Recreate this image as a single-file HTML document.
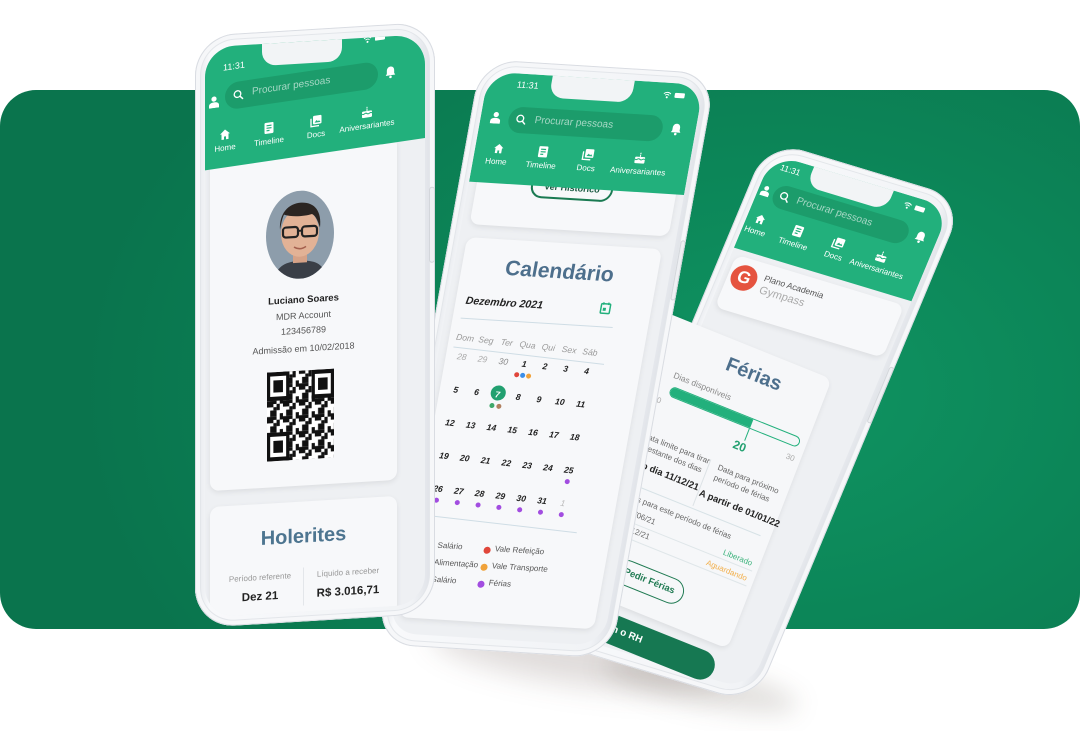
<!DOCTYPE html>
<html><head><meta charset="utf-8">
<style>
*{margin:0;padding:0;box-sizing:border-box}
body{width:1080px;height:731px;overflow:hidden;background:#fff;position:relative;font-family:"Liberation Sans",sans-serif}
.a{position:absolute}
.ph{position:absolute;left:0;top:0;transform-origin:0 0;background:linear-gradient(90deg,#e2e5ea,#f8f9fb 6%,#f1f3f6 90%,#dcdfe5);box-shadow:inset 0 0 0 1px #d9dce2,inset 0 0 0 5px #f6f7f9,inset 0 0 0 6px #e3e6ea}
.scr{position:absolute;overflow:hidden;background:#eef0f3}
.hd{position:absolute;left:0;top:0;background:#22b07c;transform-origin:0 0}
.notch{position:absolute;background:#f2f4f6;border-radius:0 0 14px 14px}
.card{position:absolute;background:#f7f8fa;border-radius:9px;box-shadow:0 2px 6px rgba(0,0,0,.08)}
.w{color:#fff}
.t{position:absolute;white-space:nowrap}
.tab{position:absolute;width:70px;margin-left:-35px;text-align:center;color:#fff;font-size:8px}
.tab svg{display:block;margin:0 auto 3px}
.srch{position:absolute;background:#1c9c6b;border-radius:14px;color:rgba(255,255,255,.6);font-size:10px}
.blk{position:absolute;left:0;top:0;transform-origin:0 0}
.btn{position:absolute;border-radius:13px;text-align:center;font-weight:bold}
.num{position:absolute;width:20px;margin-left:-10px;text-align:center;font-size:8.5px;font-weight:bold;color:#222;font-style:italic}
.dot{position:absolute;width:5px;height:5px;border-radius:50%}
</style></head><body>

<!-- green band -->
<div class="a" style="left:0;top:90px;width:1080px;height:539px;border-radius:36px;background:radial-gradient(ellipse 700px 500px at 780px 300px,#0f9462,#0c8658 45%,#0a744d 100%)"></div>

<!-- shadows -->
<div class="a" style="left:430px;top:625px;width:300px;height:60px;background:rgba(60,40,30,.16);filter:blur(14px);border-radius:50%;transform:rotate(8deg)"></div>
<div class="a" style="left:600px;top:665px;width:200px;height:40px;background:rgba(60,40,30,.14);filter:blur(12px);border-radius:50%;transform:rotate(12deg)"></div>

<!-- ================= PHONE 3 ================= -->
<div class="ph" style="width:205px;height:540px;border-radius:38px;transform:matrix(0.96,0.29,-0.39,0.935,768,140)">
  <div class="a" style="left:200px;top:180px;width:5px;height:60px;border:1px solid #d3d6db;border-radius:3px;background:#eef0f3"></div>
  <div class="scr" style="left:10px;top:12px;width:185px;height:516px;border-radius:28px">
    <div class="hd" style="width:185px;height:100px"></div>
    <div class="notch" style="left:43px;top:-12px;width:83px;height:33px"></div>
    <div class="t w" style="left:12px;top:5px;font-size:8.5px">11:31</div>
    <svg class="a" style="left:140px;top:6px" width="24" height="8" viewBox="0 0 24 8"><path d="M1 3a5 5 0 0 1 7 0M2.5 4.5a3 3 0 0 1 4 0" stroke="#fff" fill="none" stroke-width="1"/><circle cx="4.5" cy="6.5" r="1" fill="#fff"/><rect x="12" y="1.5" width="10" height="5" rx="1" fill="#fff"/></svg>
    <div class="srch" style="left:16px;top:26px;width:140px;height:24px;padding:6px 0 0 24px">Procurar pessoas</div>
    <svg class="a" style="left:22px;top:32px" width="11" height="11" viewBox="0 0 11 11"><circle cx="4.5" cy="4.5" r="3.3" stroke="#fff" stroke-width="1.3" fill="none"/><path d="M7 7l3 3" stroke="#fff" stroke-width="1.4"/></svg>
    <svg class="a" style="left:3px;top:31px" width="9" height="12" viewBox="0 0 10 12"><circle cx="5" cy="3" r="2.6" fill="#fff"/><path d="M0 12v-2.5c0-2 2-3.2 5-3.2s5 1.2 5 3.2V12z" fill="#fff"/></svg>
    <svg class="a" style="left:163px;top:30px" width="11" height="13" viewBox="0 0 12 14"><path d="M6 1c-2.5 0-4 2-4 4.5v3L.8 10.5h10.4L10 8.5v-3C10 3 8.5 1 6 1z" fill="#fff"/><circle cx="6" cy="12.3" r="1.4" fill="#fff"/></svg>
    <div class="tab" style="left:13px;top:60px"><svg width="11" height="11" viewBox="0 0 12 12"><path d="M6 1L1 5.5h1.5V11h2.5V8h2v3h2.5V5.5H11z" fill="#fff"/></svg>Home</div>
    <div class="tab" style="left:53px;top:60px"><svg width="10" height="12" viewBox="0 0 10 12"><rect x=".5" y=".5" width="9" height="11" rx="1" fill="#fff"/><path d="M2.5 3.5h5M2.5 6h5M2.5 8.5h3" stroke="#22b07c" stroke-width="1.2"/></svg>Timeline</div>
    <div class="tab" style="left:95px;top:60px"><svg width="12" height="12" viewBox="0 0 12 12"><path d="M1 3v8h8" stroke="#fff" fill="none" stroke-width="1.3"/><rect x="3" y=".5" width="8.5" height="8.5" rx="1" fill="#fff"/><path d="M4.5 7.5l2-2.5 1.5 1.5 1-1 1.5 2z" fill="#22b07c"/></svg>Docs</div>
    <div class="tab" style="left:140px;top:60px"><svg width="12" height="12" viewBox="0 0 12 12"><path d="M6 .5c.8 1 .8 1.8 0 2.2-.8-.4-.8-1.2 0-2.2z" fill="#fff"/><rect x="5.5" y="3" width="1" height="2" fill="#fff"/><rect x="1" y="5" width="10" height="6.5" rx="1" fill="#fff"/><path d="M1 7.5q1.25 1 2.5 0t2.5 0 2.5 0 2.5 0" stroke="#22b07c" fill="none"/></svg>Aniversariantes</div>
    <div class="card" style="left:5px;top:106px;width:175px;height:56px"></div>
    <div class="a" style="left:8px;top:113px;width:26px;height:26px;border-radius:50%;background:#e5533f;color:#fff;font-weight:bold;font-size:17px;text-align:center;line-height:26px">G</div>
    <div class="t" style="left:40px;top:115px;font-size:8.5px;color:#555">Plano Academia</div>
    <div class="t" style="left:40px;top:127px;font-size:11px;color:#aaa">Gympass</div>
  </div>
</div>
<!-- Férias block -->
<div class="blk" style="transform:matrix(0.92,0.37,-0.36,0.93,680,318)">
  <div class="card" style="left:-30px;top:0;width:195px;height:290px;background:#f6f7f9"></div>
  <div class="t" style="left:40px;top:14px;width:100px;text-align:center;font-size:20px;font-weight:bold;color:#4d6f8c">Férias</div>
  <div class="t" style="left:15px;top:50px;font-size:8.5px;color:#888">Dias disponíveis</div>
  <div class="t" style="left:8px;top:80px;font-size:8px;color:#aaa">0</div>
  <div class="a" style="left:17px;top:66px;width:141px;height:11px;border:1.5px solid #22b07c;border-radius:6px;background:#f4f6f8;overflow:hidden"><div style="width:88px;height:100%;background:#22b07c"></div></div>
  <div class="a" style="left:105px;top:77px;width:1px;height:13px;background:#22b07c"></div>
  <div class="t" style="left:96px;top:90px;font-size:12px;font-weight:bold;color:#22a070">20</div>
  <div class="t" style="left:150px;top:84px;font-size:8px;color:#aaa">30</div>
  <div class="t" style="left:8px;top:118px;font-size:8px;color:#666">Data limite para tirar</div>
  <div class="t" style="left:8px;top:129px;font-size:8px;color:#666">o restante dos dias</div>
  <div class="t" style="left:0;top:146px;font-size:9.5px;font-weight:bold;color:#222">Até o dia 11/12/21</div>
  <div class="a" style="left:80px;top:120px;width:1px;height:50px;background:#dde3e6"></div>
  <div class="t" style="left:90px;top:120px;font-size:8px;color:#666">Data para próximo</div>
  <div class="t" style="left:90px;top:131px;font-size:8px;color:#666">período de férias</div>
  <div class="t" style="left:82px;top:150px;font-size:9.5px;font-weight:bold;color:#222">A partir de 01/01/22</div>
  <div class="a" style="left:-30px;top:172px;width:185px;height:1px;background:#d7e2e6"></div>
  <div class="t" style="left:-20px;top:180px;font-size:8px;color:#666">Meus pedidos para este período de férias</div>
  <div class="t" style="left:-20px;top:195px;font-size:8px;color:#666">01/06/21 a 24/06/21</div>
  <div class="t" style="left:-20px;top:211px;font-size:8px;color:#666">01/12/21 a 30/12/21</div>
  <div class="t" style="left:126px;top:197px;font-size:8px;color:#3cb37c">Liberado</div>
  <div class="t" style="left:114px;top:213px;font-size:8px;color:#f2ae48">Aguardando</div>
  <div class="a" style="left:-20px;top:208px;width:180px;height:1px;background:#dfe6e9"></div>
  <div class="a" style="left:-20px;top:224px;width:180px;height:1px;background:#dfe6e9"></div>
  <div class="btn" style="left:30px;top:244px;width:74px;height:26px;border:1.5px solid #1f7a52;color:#1f7a52;font-size:9.5px;line-height:23px">Pedir Férias</div>
  <div class="btn" style="left:-70px;top:300px;width:230px;height:30px;border-radius:15px;background:#167852;color:#fff;font-size:10px;line-height:30px">Falar com o RH</div>
</div>

<!-- ================= PHONE 2 ================= -->
<div class="ph" style="width:235px;height:585px;border-radius:38px;transform:matrix(1,0.062,-0.18,1,481,59)">
  <div class="a" style="left:230px;top:167px;width:5px;height:60px;border:1px solid #d3d6db;border-radius:3px;background:#eef0f3"></div>
  <div class="scr" style="left:10px;top:12px;width:215px;height:561px;border-radius:28px">
    <div class="card" style="left:8px;top:60px;width:199px;height:92px"></div>
    <div class="btn" style="left:62px;top:98px;width:82px;height:24px;border:2px solid #1a7a52;color:#1a5a42;font-size:9px;line-height:20px">Ver Histórico</div>
    <div class="hd" style="width:215px;height:110px"></div>
    <div class="notch" style="left:64px;top:-12px;width:82px;height:34px"></div>
    <div class="t w" style="left:30px;top:6px;font-size:9px">11:31</div>
    <svg class="a" style="left:176px;top:8px" width="24" height="8" viewBox="0 0 24 8"><path d="M1 3a5 5 0 0 1 7 0M2.5 4.5a3 3 0 0 1 4 0" stroke="#fff" fill="none" stroke-width="1"/><circle cx="4.5" cy="6.5" r="1" fill="#fff"/><rect x="12" y="1.5" width="10" height="5" rx="1" fill="#fff"/></svg>
    <div class="srch" style="left:28px;top:33px;width:154px;height:26px;padding:7px 0 0 26px">Procurar pessoas</div>
    <svg class="a" style="left:35px;top:40px" width="11" height="11" viewBox="0 0 11 11"><circle cx="4.5" cy="4.5" r="3.3" stroke="#fff" stroke-width="1.3" fill="none"/><path d="M7 7l3 3" stroke="#fff" stroke-width="1.4"/></svg>
    <svg class="a" style="left:10px;top:39px" width="10" height="12" viewBox="0 0 10 12"><circle cx="5" cy="3" r="2.6" fill="#fff"/><path d="M0 12v-2.5c0-2 2-3.2 5-3.2s5 1.2 5 3.2V12z" fill="#fff"/></svg>
    <svg class="a" style="left:190px;top:39px" width="11" height="13" viewBox="0 0 12 14"><path d="M6 1c-2.5 0-4 2-4 4.5v3L.8 10.5h10.4L10 8.5v-3C10 3 8.5 1 6 1z" fill="#fff"/><circle cx="6" cy="12.3" r="1.4" fill="#fff"/></svg>
    <div class="tab" style="left:23px;top:70px"><svg width="11" height="11" viewBox="0 0 12 12"><path d="M6 1L1 5.5h1.5V11h2.5V8h2v3h2.5V5.5H11z" fill="#fff"/></svg>Home</div>
    <div class="tab" style="left:68px;top:70px"><svg width="10" height="12" viewBox="0 0 10 12"><rect x=".5" y=".5" width="9" height="11" rx="1" fill="#fff"/><path d="M2.5 3.5h5M2.5 6h5M2.5 8.5h3" stroke="#22b07c" stroke-width="1.2"/></svg>Timeline</div>
    <div class="tab" style="left:113px;top:70px"><svg width="12" height="12" viewBox="0 0 12 12"><path d="M1 3v8h8" stroke="#fff" fill="none" stroke-width="1.3"/><rect x="3" y=".5" width="8.5" height="8.5" rx="1" fill="#fff"/><path d="M4.5 7.5l2-2.5 1.5 1.5 1-1 1.5 2z" fill="#22b07c"/></svg>Docs</div>
    <div class="tab" style="left:165px;top:70px"><svg width="12" height="12" viewBox="0 0 12 12"><path d="M6 .5c.8 1 .8 1.8 0 2.2-.8-.4-.8-1.2 0-2.2z" fill="#fff"/><rect x="5.5" y="3" width="1" height="2" fill="#fff"/><rect x="1" y="5" width="10" height="6.5" rx="1" fill="#fff"/><path d="M1 7.5q1.25 1 2.5 0t2.5 0 2.5 0 2.5 0" stroke="#22b07c" fill="none"/></svg>Aniversariantes</div>

    <div class="card" style="left:8px;top:165px;width:195px;height:380px"></div>
    <div class="t" style="left:8px;top:182px;width:195px;text-align:center;font-size:21px;font-weight:bold;color:#4d6f8c">Calendário</div>
    <div class="t" style="left:18px;top:222px;font-size:10.5px;font-weight:bold;color:#222;font-style:italic">Dezembro 2021</div>
    <svg class="a" style="left:152px;top:220px" width="11" height="13" viewBox="0 0 11 13"><rect x="1" y="2.5" width="9" height="9.5" rx="1" fill="none" stroke="#22b07c" stroke-width="1.5"/><rect x="3" y="6.5" width="3" height="3" fill="#22b07c"/><path d="M3 1v2.5M8 1v2.5" stroke="#22b07c" stroke-width="1.3"/></svg>
    <div class="a" style="left:16px;top:245px;width:152px;height:1px;background:#cfdde5"></div>
    <div class="a" style="left:14px;top:250px;width:160px;height:200px;transform:skewY(3deg);transform-origin:0 0">
      <div class="a" style="left:0;top:24px;width:152px;height:1px;background:#cfdde5"></div>
      <div class="num" style="left:10px;top:9px;font-weight:normal;color:#999">Dom</div>
      <div class="num" style="left:31px;top:9px;font-weight:normal;color:#999">Seg</div>
      <div class="num" style="left:52px;top:9px;font-weight:normal;color:#999">Ter</div>
      <div class="num" style="left:73px;top:9px;font-weight:normal;color:#999">Qua</div>
      <div class="num" style="left:94px;top:9px;font-weight:normal;color:#999">Qui</div>
      <div class="num" style="left:115px;top:9px;font-weight:normal;color:#999">Sex</div>
      <div class="num" style="left:136px;top:9px;font-weight:normal;color:#999">Sáb</div>

      <div class="num" style="left:10px;top:28px;color:#aaa;font-weight:normal">28</div>
      <div class="num" style="left:31px;top:28px;color:#aaa;font-weight:normal">29</div>
      <div class="num" style="left:52px;top:28px;color:#888;font-weight:normal">30</div>
      <div class="num" style="left:73px;top:28px">1</div>
      <div class="num" style="left:94px;top:28px">2</div>
      <div class="num" style="left:115px;top:28px">3</div>
      <div class="num" style="left:136px;top:28px">4</div>
      <div class="dot" style="left:65px;top:42px;background:#e0463a"></div>
      <div class="dot" style="left:71px;top:42px;background:#3b8ee8"></div>
      <div class="dot" style="left:77px;top:42px;background:#f0a23a"></div>

      <div class="num" style="left:10px;top:61px">5</div>
      <div class="num" style="left:31px;top:61px">6</div>
      <div class="a" style="left:45px;top:57px;width:15px;height:15px;border-radius:50%;background:#22a070"></div>
      <div class="num" style="left:52px;top:61px;color:#fff">7</div>
      <div class="num" style="left:73px;top:61px">8</div>
      <div class="num" style="left:94px;top:61px">9</div>
      <div class="num" style="left:115px;top:61px">10</div>
      <div class="num" style="left:136px;top:61px">11</div>
      <div class="dot" style="left:46px;top:75px;background:#3ea86a"></div>
      <div class="dot" style="left:53px;top:75px;background:#b08060"></div>

      <div class="num" style="left:10px;top:94px">12</div>
      <div class="num" style="left:31px;top:94px">13</div>
      <div class="num" style="left:52px;top:94px">14</div>
      <div class="num" style="left:73px;top:94px">15</div>
      <div class="num" style="left:94px;top:94px">16</div>
      <div class="num" style="left:115px;top:94px">17</div>
      <div class="num" style="left:136px;top:94px">18</div>

      <div class="num" style="left:10px;top:127px">19</div>
      <div class="num" style="left:31px;top:127px">20</div>
      <div class="num" style="left:52px;top:127px">21</div>
      <div class="num" style="left:73px;top:127px">22</div>
      <div class="num" style="left:94px;top:127px">23</div>
      <div class="num" style="left:115px;top:127px">24</div>
      <div class="num" style="left:136px;top:127px">25</div>
      <div class="dot" style="left:134px;top:141px;background:#a24de0"></div>

      <div class="num" style="left:10px;top:160px">26</div>
      <div class="num" style="left:31px;top:160px">27</div>
      <div class="num" style="left:52px;top:160px">28</div>
      <div class="num" style="left:73px;top:160px">29</div>
      <div class="num" style="left:94px;top:160px">30</div>
      <div class="num" style="left:115px;top:160px">31</div>
      <div class="num" style="left:136px;top:160px;color:#bbb;font-weight:normal">1</div>
      <div class="dot" style="left:8px;top:174px;background:#a24de0"></div>
      <div class="dot" style="left:29px;top:174px;background:#a24de0"></div>
      <div class="dot" style="left:50px;top:174px;background:#a24de0"></div>
      <div class="dot" style="left:71px;top:174px;background:#a24de0"></div>
      <div class="dot" style="left:92px;top:174px;background:#a24de0"></div>
      <div class="dot" style="left:113px;top:174px;background:#a24de0"></div>
      <div class="dot" style="left:134px;top:174px;background:#a24de0"></div>
      <div class="a" style="left:-10px;top:192px;width:165px;height:1px;background:#cfdde5"></div>
    </div>
    <div class="dot" style="left:6px;top:470px;width:7px;height:7px;background:#3ea86a"></div>
    <div class="t" style="left:16px;top:467px;font-size:8px;color:#555">Vale Salário</div>
    <div class="dot" style="left:6px;top:487px;width:7px;height:7px;background:#3b8ee8"></div>
    <div class="t" style="left:16px;top:484px;font-size:8px;color:#555">Vale Alimentação</div>
    <div class="dot" style="left:6px;top:504px;width:7px;height:7px;background:#b08060"></div>
    <div class="t" style="left:16px;top:501px;font-size:8px;color:#555">Vale Salário</div>
    <div class="dot" style="left:80px;top:470px;width:7px;height:7px;background:#e0463a"></div>
    <div class="t" style="left:91px;top:467px;font-size:8px;color:#555">Vale Refeição</div>
    <div class="dot" style="left:80px;top:487px;width:7px;height:7px;background:#f0a23a"></div>
    <div class="t" style="left:91px;top:484px;font-size:8px;color:#555">Vale Transporte</div>
    <div class="dot" style="left:80px;top:504px;width:7px;height:7px;background:#a24de0"></div>
    <div class="t" style="left:91px;top:501px;font-size:8px;color:#555">Férias</div>
  </div>
</div>

<!-- ================= PHONE 1 ================= -->
<div class="ph" style="width:240px;height:592px;border-radius:40px;transform:matrix(1,-0.06,0,1,195,36)">
  <div class="a" style="left:234px;top:165px;width:6px;height:76px;border:1px solid #d3d6db;border-radius:3px;background:#eef0f3"></div>
  <div class="scr" style="left:10px;top:12px;width:220px;height:570px;border-radius:30px">
    <div class="card" style="left:5px;top:100px;width:187px;height:344px"></div>
    <svg class="a" style="left:61px;top:149px" width="68" height="88" viewBox="0 0 68 88">
      <defs><clipPath id="pc"><ellipse cx="34" cy="44" rx="34" ry="44"/></clipPath></defs>
      <g clip-path="url(#pc)">
        <rect width="68" height="88" fill="#8d9dab"/>
        <path d="M8 88c2-14 12-18 26-18s24 4 26 18z" fill="#3a3f47"/>
        <rect x="27" y="58" width="14" height="14" fill="#d6a287"/>
        <ellipse cx="34" cy="42" rx="19" ry="24" fill="#e2b296"/>
        <path d="M14 38c-1-16 8-26 21-26s21 9 19 26c-2-6-4-12-8-14-8 2-20 2-28-1-2 4-3 10-4 15z" fill="#2b2522"/>
        <rect x="17" y="36" width="15" height="10" rx="3" fill="none" stroke="#222" stroke-width="2.2"/>
        <rect x="36" y="36" width="15" height="10" rx="3" fill="none" stroke="#222" stroke-width="2.2"/>
        <path d="M32 40h4" stroke="#222" stroke-width="2"/>
        <path d="M28 56q6 4 12 0" stroke="#a5604e" stroke-width="1.6" fill="none"/>
      </g>
    </svg>
    <div class="t" style="left:5px;top:253px;width:187px;text-align:center;font-size:9.5px;font-weight:bold;color:#222">Luciano Soares</div>
    <div class="t" style="left:5px;top:269px;width:187px;text-align:center;font-size:9px;color:#555">MDR Account</div>
    <div class="t" style="left:5px;top:284px;width:187px;text-align:center;font-size:9px;color:#555">123456789</div>
    <div class="t" style="left:5px;top:302px;width:187px;text-align:center;font-size:9px;color:#555">Admissão em 10/02/2018</div>
    <svg class="a" style="left:62px;top:329px" width="67" height="89" viewBox="0 0 21 28" preserveAspectRatio="none">
      <defs><pattern id="qp" width="5" height="5" patternUnits="userSpaceOnUse"><rect width="5" height="5" fill="#fff"/><rect x="0" y="0" width="2" height="1" fill="#111"/><rect x="3" y="0" width="1" height="2" fill="#111"/><rect x="1" y="2" width="2" height="2" fill="#111"/><rect x="4" y="3" width="1" height="2" fill="#111"/><rect x="0" y="4" width="3" height="1" fill="#111"/><rect x="2" y="1" width="1" height="1" fill="#111"/></pattern></defs>
      <rect width="21" height="28" fill="url(#qp)"/>
      <g fill="#111"><rect x="0" y="0" width="7" height="9"/><rect x="14" y="0" width="7" height="9"/><rect x="0" y="19" width="7" height="9"/></g>
      <g fill="#fff"><rect x="1" y="1.3" width="5" height="6.4"/><rect x="15" y="1.3" width="5" height="6.4"/><rect x="1" y="20.3" width="5" height="6.4"/></g>
      <g fill="#111"><rect x="2" y="2.6" width="3" height="3.8"/><rect x="16" y="2.6" width="3" height="3.8"/><rect x="2" y="21.6" width="3" height="3.8"/></g>
    </svg>
    <div class="card" style="left:5px;top:460px;width:187px;height:130px"></div>
    <div class="t" style="left:5px;top:484px;width:187px;text-align:center;font-size:20px;font-weight:bold;color:#4d7590">Holerites</div>
    <div class="t" style="left:10px;top:529px;width:90px;text-align:center;font-size:8px;color:#999">Período referente</div>
    <div class="t" style="left:98px;top:529px;width:90px;text-align:center;font-size:8px;color:#999">Líquido a receber</div>
    <div class="t" style="left:10px;top:547px;width:90px;text-align:center;font-size:11.5px;font-weight:bold;color:#222">Dez 21</div>
    <div class="t" style="left:98px;top:547px;width:90px;text-align:center;font-size:11.5px;font-weight:bold;color:#222">R$ 3.016,71</div>
    <div class="a" style="left:98px;top:526px;width:1px;height:38px;background:#e3e6ea"></div>
    <div class="a" style="left:20px;top:570px;width:160px;height:1px;background:#d7e2e6"></div>

    <div class="hd" style="width:220px;height:123px;transform:skewY(-5deg)">
      <div class="t w" style="left:18px;top:18px;font-size:9px">11:31</div>
      <svg class="a" style="left:158px;top:12px" width="24" height="8" viewBox="0 0 24 8"><path d="M1 3a5 5 0 0 1 7 0M2.5 4.5a3 3 0 0 1 4 0" stroke="#fff" fill="none" stroke-width="1"/><circle cx="4.5" cy="6.5" r="1" fill="#fff"/><rect x="12" y="1.5" width="10" height="5" rx="1" fill="#fff"/></svg>
      <div class="srch" style="left:20px;top:39px;width:153px;height:27px;padding:7px 0 0 27px">Procurar pessoas</div>
      <svg class="a" style="left:28px;top:47px" width="11" height="11" viewBox="0 0 11 11"><circle cx="4.5" cy="4.5" r="3.3" stroke="#fff" stroke-width="1.3" fill="none"/><path d="M7 7l3 3" stroke="#fff" stroke-width="1.4"/></svg>
      <svg class="a" style="left:4px;top:50px" width="10" height="12" viewBox="0 0 10 12"><circle cx="5" cy="3" r="2.6" fill="#fff"/><path d="M0 12v-2.5c0-2 2-3.2 5-3.2s5 1.2 5 3.2V12z" fill="#fff"/></svg>
      <svg class="a" style="left:180px;top:45px" width="11" height="14" viewBox="0 0 12 14"><path d="M6 1c-2.5 0-4 2-4 4.5v3L.8 10.5h10.4L10 8.5v-3C10 3 8.5 1 6 1z" fill="#fff"/><circle cx="6" cy="12.3" r="1.4" fill="#fff"/></svg>
      <div class="tab" style="left:20px;top:84px"><svg width="12" height="12" viewBox="0 0 12 12"><path d="M6 1L1 5.5h1.5V11h2.5V8h2v3h2.5V5.5H11z" fill="#fff"/></svg>Home</div>
      <div class="tab" style="left:64px;top:84px"><svg width="10" height="12" viewBox="0 0 10 12"><rect x=".5" y=".5" width="9" height="11" rx="1" fill="#fff"/><path d="M2.5 3.5h5M2.5 6h5M2.5 8.5h3" stroke="#22b07c" stroke-width="1.2"/></svg>Timeline</div>
      <div class="tab" style="left:111px;top:84px"><svg width="12" height="12" viewBox="0 0 12 12"><path d="M1 3v8h8" stroke="#fff" fill="none" stroke-width="1.3"/><rect x="3" y=".5" width="8.5" height="8.5" rx="1" fill="#fff"/><path d="M4.5 7.5l2-2.5 1.5 1.5 1-1 1.5 2z" fill="#22b07c"/></svg>Docs</div>
      <div class="tab" style="left:162px;top:82px"><svg width="12" height="13" viewBox="0 0 12 12"><path d="M6 .5c.8 1 .8 1.8 0 2.2-.8-.4-.8-1.2 0-2.2z" fill="#fff"/><rect x="5.5" y="3" width="1" height="2" fill="#fff"/><rect x="1" y="5" width="10" height="6.5" rx="1" fill="#fff"/><path d="M1 7.5q1.25 1 2.5 0t2.5 0 2.5 0 2.5 0" stroke="#22b07c" fill="none"/></svg>Aniversariantes</div>
    </div>
    <div class="notch" style="left:57px;top:-12px;width:80px;height:34px"></div>
  </div>
</div>

</body></html>
